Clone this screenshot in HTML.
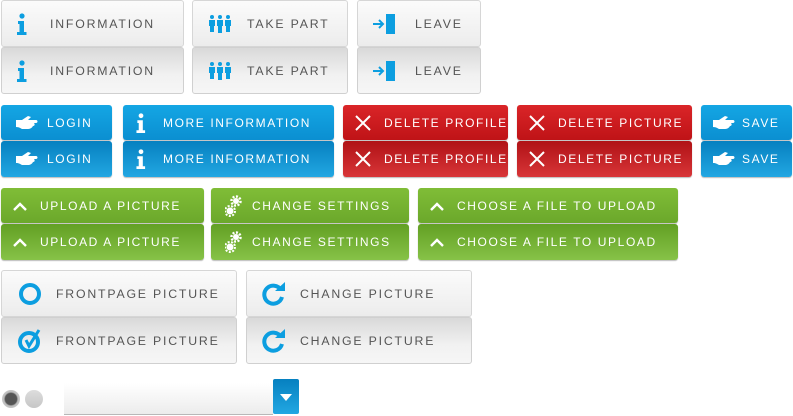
<!DOCTYPE html>
<html><head><meta charset="utf-8"><style>
body{margin:0;width:793px;height:416px;background:#fff;position:relative;overflow:hidden;font-family:"Liberation Sans",sans-serif;}
.b{position:absolute;box-sizing:border-box;border-radius:3px;text-transform:uppercase;white-space:nowrap;}
.b span{position:absolute;top:50%;transform:translateY(-50%);}
.b svg{position:absolute;top:50%;transform:translateY(-50%);}
.g{background:linear-gradient(#fbfbfb,#ececec);border:1px solid #d6d6d6;color:#555;font-size:12.3px;letter-spacing:1.8px;}
.gp{background:linear-gradient(#d9d9d9,#f1f1f1 60%,#f6f6f6);border:1px solid #d0d0d0;color:#555;font-size:12.3px;letter-spacing:1.8px;}
.c{color:#fff;font-size:12px;letter-spacing:1.6px;}
.bl{background:linear-gradient(#14a6e4,#0b8fd1);box-shadow:0 1px 1px #bbb;}
.blp{background:linear-gradient(#0680c0,#22a7e2);box-shadow:0 1px 1px #bbb;}
.rd{background:linear-gradient(#da2528,#bf1317);box-shadow:0 1px 1px #bbb;}
.rdp{background:linear-gradient(#b01216,#d83538);box-shadow:0 1px 1px #bbb;}
.gr{background:linear-gradient(#80bd37,#6ba82b);box-shadow:0 1px 1px #bbb;}
.grp{background:linear-gradient(#62a024,#86c247);box-shadow:0 1px 1px #bbb;}
</style></head><body>
<div class="b g" style="left:1px;top:0;width:183px;height:47px"><svg style="left:15px" width="10" height="22" viewBox="0 0 10 22"><circle cx="5" cy="3" r="2.6" fill="#0c9ee0"/><path d="M1 8h6v11h2.5v3H0v-3h2.5v-8H1z" fill="#0c9ee0"/></svg><span style="left:48px">Information</span></div>
<div class="b gp" style="left:1px;top:47px;width:183px;height:47px"><svg style="left:15px" width="10" height="22" viewBox="0 0 10 22"><circle cx="5" cy="3" r="2.6" fill="#0c9ee0"/><path d="M1 8h6v11h2.5v3H0v-3h2.5v-8H1z" fill="#0c9ee0"/></svg><span style="left:48px">Information</span></div>
<div class="b g" style="left:192px;top:0;width:156px;height:47px"><svg style="left:15px" width="24" height="18" viewBox="0 0 24 18"><g fill="#0c9ee0"><circle cx="4" cy="2" r="2"/><circle cx="12" cy="2" r="2"/><circle cx="20" cy="2" r="2"/><path d="M1 5h6v6H6v6H2v-6H1zM9 5h6v6h-1v7h-4v-7H9zM17 5h6v6h-1v6h-4v-6h-1z"/></g></svg><span style="left:54px">Take part</span></div>
<div class="b gp" style="left:192px;top:47px;width:156px;height:47px"><svg style="left:15px" width="24" height="18" viewBox="0 0 24 18"><g fill="#0c9ee0"><circle cx="4" cy="2" r="2"/><circle cx="12" cy="2" r="2"/><circle cx="20" cy="2" r="2"/><path d="M1 5h6v6H6v6H2v-6H1zM9 5h6v6h-1v7h-4v-7H9zM17 5h6v6h-1v6h-4v-6h-1z"/></g></svg><span style="left:54px">Take part</span></div>
<div class="b g" style="left:357px;top:0;width:124px;height:47px"><svg style="left:14px" width="24" height="20" viewBox="0 0 24 20"><path d="M1 10h10M7 6l4 4-4 4" stroke="#0c9ee0" stroke-width="2" fill="none"/><rect x="14" y="0" width="9" height="20" fill="#0c9ee0"/></svg><span style="left:57px">Leave</span></div>
<div class="b gp" style="left:357px;top:47px;width:124px;height:47px"><svg style="left:14px" width="24" height="20" viewBox="0 0 24 20"><path d="M1 10h10M7 6l4 4-4 4" stroke="#0c9ee0" stroke-width="2" fill="none"/><rect x="14" y="0" width="9" height="20" fill="#0c9ee0"/></svg><span style="left:57px">Leave</span></div>
<div class="b c bl" style="left:1px;top:105px;width:111px;height:35px"><svg style="left:15px" width="22" height="14" viewBox="0 0 22 14"><path d="M0 4h6l6-4 3 1-3 3h8c2 0 2 3 0 3h-2c1 1 1 3-1 3-1 2-3 3-5 3H6c-2-1-3-2-6-2z" fill="#fff"/></svg><span style="left:46px">Login</span></div>
<div class="b c blp" style="left:1px;top:141px;width:111px;height:36px"><svg style="left:15px" width="22" height="14" viewBox="0 0 22 14"><path d="M0 4h6l6-4 3 1-3 3h8c2 0 2 3 0 3h-2c1 1 1 3-1 3-1 2-3 3-5 3H6c-2-1-3-2-6-2z" fill="#fff"/></svg><span style="left:46px">Login</span></div>
<div class="b c bl" style="left:123px;top:105px;width:211px;height:35px"><svg style="left:13px" width="10" height="20" viewBox="0 0 10 22"><circle cx="5" cy="3" r="2.6" fill="#fff"/><path d="M1 8h6v11h2.5v3H0v-3h2.5v-8H1z" fill="#fff"/></svg><span style="left:40px">More information</span></div>
<div class="b c blp" style="left:123px;top:141px;width:211px;height:36px"><svg style="left:13px" width="10" height="20" viewBox="0 0 10 22"><circle cx="5" cy="3" r="2.6" fill="#fff"/><path d="M1 8h6v11h2.5v3H0v-3h2.5v-8H1z" fill="#fff"/></svg><span style="left:40px">More information</span></div>
<div class="b c rd" style="left:343px;top:105px;width:165px;height:35px"><svg style="left:12px" width="16" height="16" viewBox="0 0 16 16"><path d="M1 1l14 14M15 1L1 15" stroke="#fff" stroke-width="2"/></svg><span style="left:41px">Delete profile</span></div>
<div class="b c rdp" style="left:343px;top:141px;width:165px;height:36px"><svg style="left:12px" width="16" height="16" viewBox="0 0 16 16"><path d="M1 1l14 14M15 1L1 15" stroke="#fff" stroke-width="2"/></svg><span style="left:41px">Delete profile</span></div>
<div class="b c rd" style="left:517px;top:105px;width:175px;height:35px"><svg style="left:12px" width="16" height="16" viewBox="0 0 16 16"><path d="M1 1l14 14M15 1L1 15" stroke="#fff" stroke-width="2"/></svg><span style="left:41px">Delete picture</span></div>
<div class="b c rdp" style="left:517px;top:141px;width:175px;height:36px"><svg style="left:12px" width="16" height="16" viewBox="0 0 16 16"><path d="M1 1l14 14M15 1L1 15" stroke="#fff" stroke-width="2"/></svg><span style="left:41px">Delete picture</span></div>
<div class="b c bl" style="left:701px;top:105px;width:91px;height:35px"><svg style="left:12px" width="22" height="14" viewBox="0 0 22 14"><path d="M0 4h6l6-4 3 1-3 3h8c2 0 2 3 0 3h-2c1 1 1 3-1 3-1 2-3 3-5 3H6c-2-1-3-2-6-2z" fill="#fff"/></svg><span style="left:41px">Save</span></div>
<div class="b c blp" style="left:701px;top:141px;width:91px;height:36px"><svg style="left:12px" width="22" height="14" viewBox="0 0 22 14"><path d="M0 4h6l6-4 3 1-3 3h8c2 0 2 3 0 3h-2c1 1 1 3-1 3-1 2-3 3-5 3H6c-2-1-3-2-6-2z" fill="#fff"/></svg><span style="left:41px">Save</span></div>
<div class="b c gr" style="left:1px;top:188px;width:203px;height:35px"><svg style="left:11px" width="16" height="10" viewBox="0 0 16 10"><path d="M2 9l6-6 6 6" stroke="#fff" stroke-width="2.4" fill="none"/></svg><span style="left:39px">Upload a picture</span></div>
<div class="b c grp" style="left:1px;top:224px;width:203px;height:36px"><svg style="left:11px" width="16" height="10" viewBox="0 0 16 10"><path d="M2 9l6-6 6 6" stroke="#fff" stroke-width="2.4" fill="none"/></svg><span style="left:39px">Upload a picture</span></div>
<div class="b c gr" style="left:211px;top:188px;width:198px;height:35px"><svg style="left:14px" width="18" height="22" viewBox="0 0 18 22"><g fill="#fff"><circle cx="11" cy="6" r="4.5" stroke="#fff" stroke-width="2.5" stroke-dasharray="2 1.5" fill="none"/><circle cx="11" cy="6" r="3"/><circle cx="5" cy="16" r="3.5"/><circle cx="5" cy="16" r="5" stroke="#fff" stroke-width="2" stroke-dasharray="2 1.5" fill="none"/></g></svg><span style="left:41px">Change settings</span></div>
<div class="b c grp" style="left:211px;top:224px;width:198px;height:36px"><svg style="left:14px" width="18" height="22" viewBox="0 0 18 22"><g fill="#fff"><circle cx="11" cy="6" r="4.5" stroke="#fff" stroke-width="2.5" stroke-dasharray="2 1.5" fill="none"/><circle cx="11" cy="6" r="3"/><circle cx="5" cy="16" r="3.5"/><circle cx="5" cy="16" r="5" stroke="#fff" stroke-width="2" stroke-dasharray="2 1.5" fill="none"/></g></svg><span style="left:41px">Change settings</span></div>
<div class="b c gr" style="left:418px;top:188px;width:260px;height:35px"><svg style="left:11px" width="16" height="10" viewBox="0 0 16 10"><path d="M2 9l6-6 6 6" stroke="#fff" stroke-width="2.4" fill="none"/></svg><span style="left:39px">Choose a file to upload</span></div>
<div class="b c grp" style="left:418px;top:224px;width:260px;height:36px"><svg style="left:11px" width="16" height="10" viewBox="0 0 16 10"><path d="M2 9l6-6 6 6" stroke="#fff" stroke-width="2.4" fill="none"/></svg><span style="left:39px">Choose a file to upload</span></div>
<div class="b g" style="left:1px;top:270px;width:236px;height:47px"><svg style="left:16px" width="24" height="24" viewBox="0 0 24 24"><circle cx="12" cy="12" r="9" stroke="#0c9ee0" stroke-width="4" fill="none"/></svg><span style="left:54px">Frontpage picture</span></div>
<div class="b gp" style="left:1px;top:317px;width:236px;height:47px"><svg style="left:16px" width="26" height="26" viewBox="0 0 26 26"><circle cx="11" cy="14" r="9" stroke="#0c9ee0" stroke-width="4" fill="none"/><path d="M8 12l3 6 10-16" stroke="#0c9ee0" stroke-width="3" fill="none"/></svg><span style="left:54px">Frontpage picture</span></div>
<div class="b g" style="left:246px;top:270px;width:226px;height:47px"><svg style="left:15px" width="24" height="24" viewBox="0 0 24 24"><path d="M19 8A9 9 0 1 0 20 15" stroke="#0c9ee0" stroke-width="4" fill="none"/><path d="M13 9h10V0z" fill="#0c9ee0"/></svg><span style="left:53px">Change picture</span></div>
<div class="b gp" style="left:246px;top:317px;width:226px;height:47px"><svg style="left:15px" width="24" height="24" viewBox="0 0 24 24"><path d="M19 8A9 9 0 1 0 20 15" stroke="#0c9ee0" stroke-width="4" fill="none"/><path d="M13 9h10V0z" fill="#0c9ee0"/></svg><span style="left:53px">Change picture</span></div>
<div style="position:absolute;left:2px;top:390px;width:18px;height:18px;border-radius:50%;background:radial-gradient(circle,#555 45%,#bbb 55%,#ddd)"></div>
<div style="position:absolute;left:25px;top:390px;width:18px;height:18px;border-radius:50%;background:linear-gradient(#ddd,#c6c6c6)"></div>
<div style="position:absolute;left:64px;top:383px;width:209px;height:31px;background:linear-gradient(#fff,#ececec);border-bottom:1px solid #b8b8b8"></div>
<div style="position:absolute;left:273px;top:379px;width:26px;height:35px;border-radius:2px;background:linear-gradient(#0680c0,#22a7e2)"><svg style="position:absolute;left:7px;top:15px" width="12" height="7" viewBox="0 0 12 7"><path d="M0 0h12L6 7z" fill="#fff"/></svg></div>
</body></html>
